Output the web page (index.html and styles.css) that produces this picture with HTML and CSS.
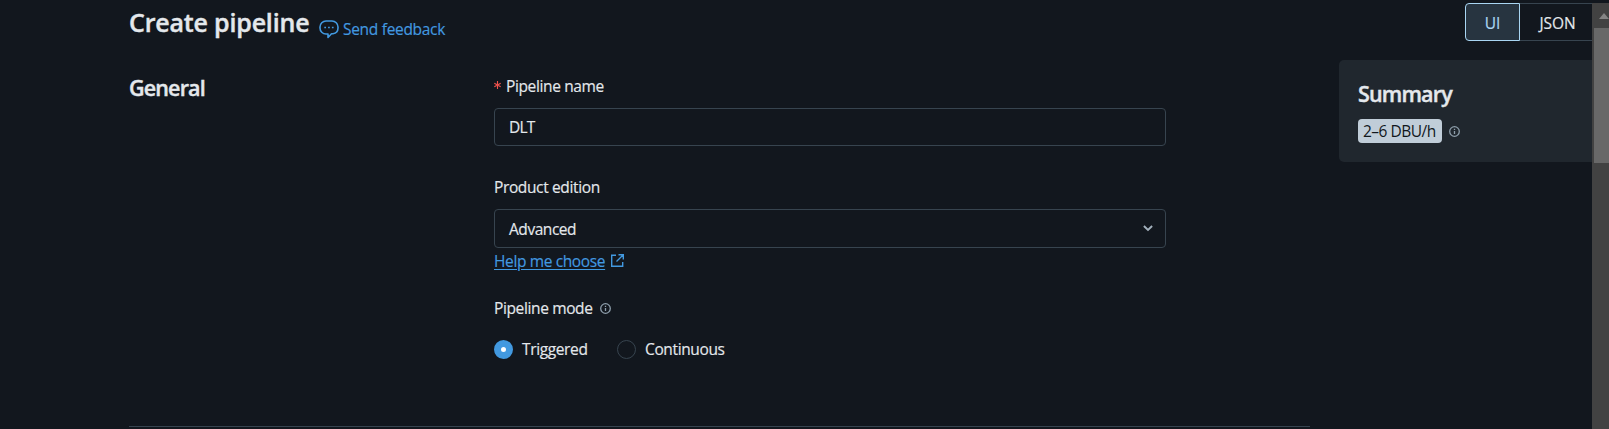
FILE: index.html
```
<!DOCTYPE html>
<html lang="en">
<head>
<meta charset="utf-8">
<title>Create pipeline</title>
<link rel="stylesheet" href="styles.css">
</head>
<body>
<div class="app">
  <div class="page">
    <header class="header">
      <h1 class="title">Create pipeline</h1>
      <a class="feedback">
        <svg width="20" height="19" viewBox="0 0 20 19" fill="none" stroke="currentColor" stroke-width="1.6" stroke-linejoin="round"><path d="M7 1h6a6 6 0 0 1 6 6v1a6 6 0 0 1-5 5.8h-1.500L9 17.500V14H7a6 6 0 0 1-6-6V7a6 6 0 0 1 6-6z"/><path d="M5.3 7.5h1.7M9.1 7.5h1.7M12.9 7.5h1.7" stroke-width="1.7"/></svg>
        <span class="feedback-text">Send feedback</span>
      </a>
      <div class="toggle">
        <span class="toggle-item toggle-active">UI</span>
        <span class="toggle-item toggle-json">JSON</span>
      </div>
    </header>
    <div class="content">
      <section class="section">
        <h2 class="heading">General</h2>
        <div class="form">
          <div class="label"><svg class="required" width="7" height="8" viewBox="0 0 7 8" fill="none" stroke="currentColor" stroke-width="1.1"><path d="M3.500 0v8M.3 2.200l6.400 3.600M6.700 2.200L.3 5.800"/></svg><span>Pipeline name</span></div>
          <div class="field input"><span class="value-name">DLT</span></div>
          <div class="label label-edition"><span>Product edition</span></div>
          <div class="field select"><span class="value-edition">Advanced</span>
            <svg width="10" height="7" viewBox="0 0 10 7" fill="none" stroke="#a3b1bd" stroke-width="1.9"><path d="M.9 1L5 4.900 9.100 1"/></svg>
          </div>
          <a class="help"><span class="help-text">Help me choose</span>
            <svg width="13" height="13" viewBox="0 0 13 13" fill="none" stroke="currentColor" stroke-width="1.4"><path d="M5 1.300H.7v11h11V8M7.500.7h4.800v4.800M12 1L5.500 7.500"/></svg>
          </a>
          <div class="label label-mode"><span>Pipeline mode</span>
            <svg class="info" width="11" height="11" viewBox="0 0 11 11" fill="none" stroke="currentColor" stroke-width="1.3"><circle cx="5.500" cy="5.500" r="4.800"/><path d="M5.500 5v3M5.500 2.800v1.300"/></svg>
          </div>
          <div class="radios">
            <span class="radio radio-on"></span><span class="option">Triggered</span>
            <span class="radio"></span><span>Continuous</span>
          </div>
        </div>
      </section>
      <aside class="summary">
        <h2 class="summary-title">Summary</h2>
        <div class="cost">
          <span class="badge">2–6 DBU/h</span>
          <svg class="info" width="11" height="11" viewBox="0 0 11 11" fill="none" stroke="currentColor" stroke-width="1.3"><circle cx="5.500" cy="5.500" r="4.800"/><path d="M5.500 5v3M5.500 2.800v1.300"/></svg>
        </div>
      </aside>
    </div>
  </div>
  <div class="scrollbar"><div class="arrow"></div><div class="thumb"></div></div>
</div>
</body>
</html>
```
FILE: styles.css
```
* { box-sizing: border-box; }
body {
  margin: 0;
  background: #11171c;
  color: #e4e8ec;
  font: 15.5px/24px "Open Sans", "Noto Sans", sans-serif;
  letter-spacing: -0.37px;
  -webkit-text-stroke: 0.15px currentColor;
  overflow: hidden;
}
h1, h2 { margin: 0; font-weight: 600; white-space: nowrap; -webkit-text-stroke: 0.4px currentColor; }
svg { display: block; flex: none; }
span { white-space: nowrap; }
.app { display: flex; width: 1609px; height: 429px; background: #12171e; }
.page { width: 1592px; overflow: hidden; }
.header { display: flex; align-items: flex-start; height: 60px; padding-left: 129px; }
.title { width: 190px; padding-top: 5px; font-size: 25px; line-height: 34px; letter-spacing: -0.18px; }
.feedback { display: flex; gap: 4px; padding-top: 17px; color: #4299e0; }
.feedback-text { letter-spacing: -0.3px; }
.feedback svg { margin-top: 3px; }
.toggle { display: flex; width: 127px; height: 38px; margin: 3px 0 0 auto; }
.toggle-item { display: flex; align-items: center; justify-content: center; padding-top: 1px; letter-spacing: -0.1px; }
.toggle-active { width: 55px; background: #273440; border: 1px solid #a9d6f3; border-radius: 4px 0 0 4px; color: #acd7f3; }
.toggle-json { width: 72px; padding-left: 3px; border: 1px solid #37444f; border-width: 1px 0; }
.content { display: flex; align-items: flex-start; gap: 29px; padding-left: 129px; }
.section { display: flex; width: 1181px; height: 367px; border-bottom: 1px solid #37444f; }
.heading { width: 365px; padding-top: 13px; font-size: 21.5px; line-height: 30px; letter-spacing: -0.85px; }
.form { width: 672px; padding-top: 14px; }
.label { display: flex; height: 24px; }
.required { margin: 7px 5px 0 0; color: #f0524d; }
.field { display: flex; align-items: center; justify-content: space-between; margin-top: 10px; padding: 0 12px 0 14px; border: 1px solid #37444f; border-radius: 4px; }
.input { height: 38px; }
.value-name { letter-spacing: -0.8px; }
.value-edition { letter-spacing: -0.45px; }
.label-edition { margin-top: 29px; }
.select { height: 39px; }
.help { display: flex; gap: 6px; margin-top: 1px; height: 24px; color: #4299e0; }
.help-text { text-decoration: underline; text-decoration-thickness: 1px; text-underline-offset: 2px; }
.help svg { margin-top: 5px; }
.label-mode { margin-top: 23px; gap: 7px; }
.info { color: #8d9daa; }
.label-mode .info { margin-top: 7px; }
.radios { display: flex; align-items: center; margin-top: 17px; }
.radio { width: 19px; height: 19px; margin-right: 9px; border: 1px solid #37444f; border-radius: 50%; }
.radio-on { border: 7px solid #4299e0; background: #fff; }
.option { width: 95px; }
.summary { width: 253px; height: 102px; padding: 19px 0 0 19px; background: #20272e; border-radius: 5px 0 0 5px; }
.summary-title { font-size: 21.5px; line-height: 30px; letter-spacing: -0.85px; }
.cost { display: flex; align-items: center; gap: 7px; margin-top: 10px; }
.badge { width: 84px; height: 24px; padding-left: 5px; border-radius: 4px; background: #c0cdd8; color: #11171c; letter-spacing: -0.5px; -webkit-text-stroke: 0; }
.scrollbar { display: flow-root; width: 17px; height: 426px; margin-top: 3px; padding-left: 2px; background: #424242; }
.arrow { width: 0; height: 0; margin: 10px 0 9px 5px; border: 5.500px solid transparent; border-top: 0; border-bottom: 6px solid #858585; }
.thumb { height: 135px; background: #686868; }
```
